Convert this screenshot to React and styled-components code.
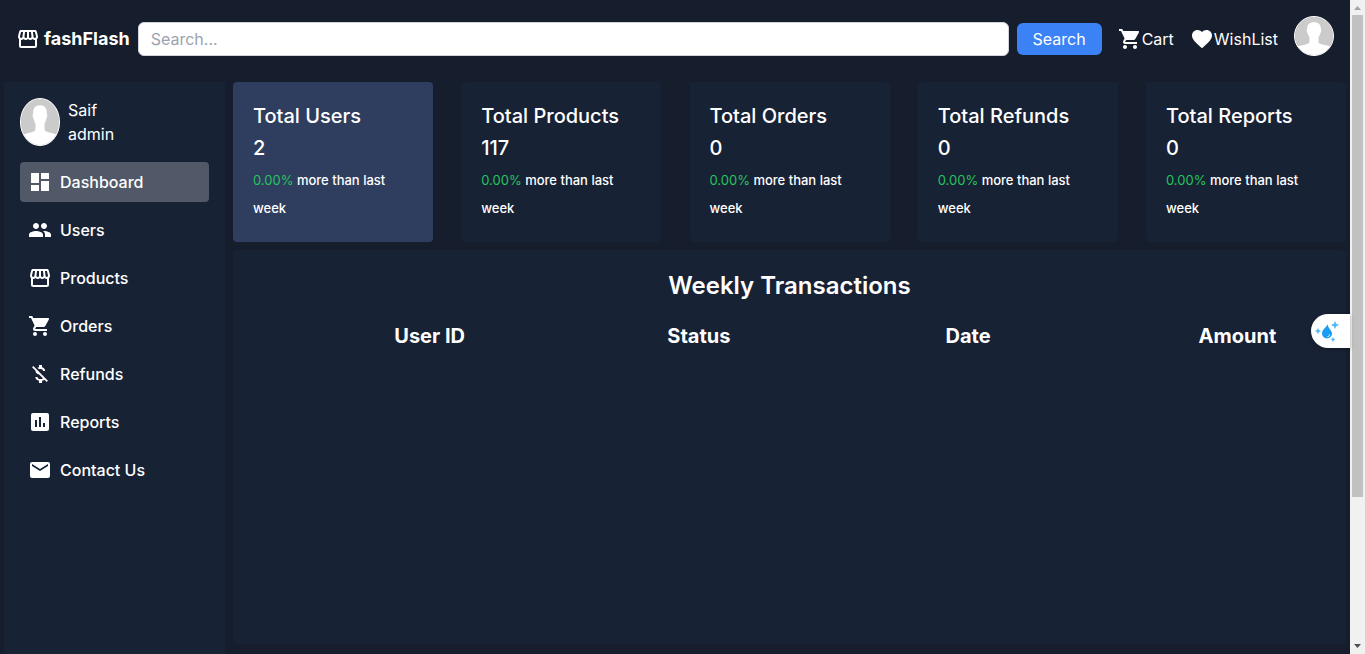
import React from "react";
import styled, { createGlobalStyle } from "styled-components";
import {
  MdDashboard,
  MdPeople,
  MdOutlineStorefront,
  MdShoppingCart,
  MdMoneyOff,
  MdAssessment,
  MdEmail,
  MdFavorite,
} from "react-icons/md";

const GlobalStyle = createGlobalStyle`
  *, *::before, *::after { box-sizing: border-box; }
  body {
    margin: 0;
    background: #161d2c;
    color: #fff;
    font-family: Inter, "Liberation Sans", sans-serif;
    font-size: 16px;
    line-height: 24px;
  }
  h1, h2, h3, p, ul { margin: 0; padding: 0; }
  a { color: inherit; text-decoration: none; }
`;

const Shell = styled.div`
  display: flex;
  min-height: 100vh;
`;

const Page = styled.div`
  flex: 1;
  min-width: 0;
  display: flex;
  flex-direction: column;
`;

const Header = styled.header`
  display: flex;
  align-items: center;
  gap: 16px;
  padding: 16px 16px 20px;
`;

const Brand = styled.a`
  display: flex;
  align-items: center;
  gap: 4px;
  font-size: 18px;
  font-weight: 700;
`;

const SearchForm = styled.form`
  flex: 1;
  display: flex;
  align-items: center;
  gap: 8px;
  margin-left: -8px;
`;

const SearchInput = styled.input`
  flex: 1;
  min-width: 0;
  height: 34px;
  padding: 4px 12px;
  border: 1px solid #d1d5db;
  border-radius: 6px;
  background: #fff;
  color: #111827;
  font: inherit;
  &::placeholder { color: #9ca3af; opacity: 1; }
`;

const SearchButton = styled.button`
  height: 32px;
  padding: 4px 16px;
  border: 0;
  border-radius: 6px;
  background: #3b82f6;
  color: #fff;
  font: inherit;
`;

const HeaderLink = styled.a`
  display: flex;
  align-items: center;
`;

const AvatarFrame = styled.span`
  display: block;
  flex: none;
  width: 40px;
  height: ${(p) => p.$height}px;
  margin-bottom: ${(p) => p.$below || 0}px;
  border: 1px solid #fff;
  border-radius: 50%;
  overflow: hidden;
  background: #ccc;
  svg { display: block; width: 100%; height: 100%; }
`;

const Body = styled.div`
  flex: 1;
  display: grid;
  grid-template-columns: 221px minmax(0, 1fr);
  gap: 8px;
  padding: 0 4px;
`;

const Sidebar = styled.aside`
  padding: 16px;
  background: #182235;
`;

const Profile = styled.div`
  display: flex;
  align-items: center;
  gap: 8px;
  margin-bottom: 16px;
`;

const NavList = styled.ul`
  display: flex;
  flex-direction: column;
  gap: 8px;
  list-style: none;
`;

const NavLink = styled.a`
  display: flex;
  align-items: center;
  gap: 8px;
  padding: 8px;
  border-radius: 4px;
  background: ${(p) => (p.$active ? "#515868" : "transparent")};
  font-weight: 500;
`;

const Main = styled.main`
  display: flex;
  flex-direction: column;
  gap: 8px;
  padding-bottom: 10px;
`;

const Cards = styled.section`
  display: flex;
  justify-content: space-between;
`;

const Card = styled.article`
  display: flex;
  flex-direction: column;
  gap: 4px;
  width: 200px;
  padding: 20px;
  border-radius: 4px;
  background: ${(p) => (p.$active ? "#2f3d5e" : "#182235")};
`;

const CardTitle = styled.h2`
  font-size: 20px;
  font-weight: 500;
  line-height: 28px;
  white-space: nowrap;
`;

const CardValue = styled.p`
  font-size: 20px;
  font-weight: 500;
  line-height: 28px;
`;

const CardNote = styled.p`
  font-size: 13px;
  font-weight: 500;
  line-height: 28px;
`;

const Percent = styled.span`
  color: #22c55e;
  font-weight: 400;
`;

const Panel = styled.section`
  flex: 1;
  padding: 20px 18px;
  border-radius: 4px;
  background: #182235;
`;

const PanelTitle = styled.h2`
  margin-bottom: 20px;
  font-size: 24px;
  font-weight: 600;
  line-height: 32px;
  text-align: center;
`;

const Table = styled.table`
  width: 100%;
  table-layout: fixed;
  border-collapse: collapse;
`;

const HeadCell = styled.th`
  padding: 0 0 0 88px;
  font-size: 20px;
  font-weight: 700;
  line-height: 28px;
  text-align: center;
`;

const Assistant = styled.button`
  position: fixed;
  top: 314px;
  right: 15px;
  display: flex;
  align-items: center;
  width: 39px;
  height: 34px;
  padding: 0 4px;
  border: 0;
  border-radius: 17px 0 0 17px;
  background: #fff;
  box-shadow: 0 1px 4px rgba(0, 0, 0, 0.3);
`;

const ScrollTrack = styled.div`
  position: sticky;
  top: 0;
  display: flex;
  flex-direction: column;
  align-items: center;
  flex: none;
  width: 15px;
  height: 100vh;
  background: #f1f1f1;
  svg { display: block; flex: none; }
`;

const ScrollRail = styled.div`
  flex: 1;
  width: 11px;
`;

const ScrollThumb = styled.div`
  height: 77.2%;
  background: #c1c1c1;
`;

function Avatar({ height, below }) {
  return (
    <AvatarFrame $height={height} $below={below}>
      <svg viewBox="0 0 40 40" preserveAspectRatio="none" role="img" aria-label="Profile">
        <rect width="40" height="40" fill="#cbcbcb" />
        <path
          fill="#fff"
          d="M20 5.500c-5 0-7.300 2.500-7.200 7-.8.500-.6 3.600.6 4.600.4 1.900 1 3.100 1.800 4v5.400c-.3 1.600-2.600 2-5.200 2.600C7 29.800 3.500 30.500 0 31v9h40v-9c-3.500-.5-7-1.200-10-1.900-2.600-.6-4.900-1-5.200-2.600v-5.400c.8-.9 1.400-2.100 1.800-4 1.200-1 1.400-4.100.6-4.600.1-4.500-2.200-7-7.200-7z"
        />
      </svg>
    </AvatarFrame>
  );
}

const nav = [
  ["Dashboard", MdDashboard],
  ["Users", MdPeople],
  ["Products", MdOutlineStorefront],
  ["Orders", MdShoppingCart],
  ["Refunds", MdMoneyOff],
  ["Reports", MdAssessment],
  ["Contact Us", MdEmail],
];

const stats = [
  ["Total Users", 2],
  ["Total Products", 117],
  ["Total Orders", 0],
  ["Total Refunds", 0],
  ["Total Reports", 0],
];

const columns = ["User ID", "Status", "Date", "Amount"];

export default function App() {
  return (
    <>
      <GlobalStyle />
      <Shell>
        <Page>
          <Header>
            <Brand href="#">
              <MdOutlineStorefront size={24} />
              fashFlash
            </Brand>
            <SearchForm onSubmit={(e) => e.preventDefault()}>
              <SearchInput type="text" placeholder="Search..." aria-label="Search" />
              <SearchButton type="submit">Search</SearchButton>
            </SearchForm>
            <HeaderLink href="#cart">
              <MdShoppingCart size={24} />
              Cart
            </HeaderLink>
            <HeaderLink href="#wishlist">
              <MdFavorite size={24} />
              WishList
            </HeaderLink>
            <Avatar height={40} below={6} />
          </Header>
          <Body>
            <Sidebar>
              <Profile>
                <Avatar height={48} />
                <div>
                  <p>Saif</p>
                  <p>admin</p>
                </div>
              </Profile>
              <nav aria-label="Admin">
                <NavList>
                  {nav.map(([label, Icon], i) => (
                    <li key={label}>
                      <NavLink href="#" $active={i === 0}>
                        <Icon size={24} />
                        {label}
                      </NavLink>
                    </li>
                  ))}
                </NavList>
              </nav>
            </Sidebar>
            <Main>
              <Cards>
                {stats.map(([label, value], i) => (
                  <Card key={label} $active={i === 0}>
                    <CardTitle>{label}</CardTitle>
                    <CardValue>{value}</CardValue>
                    <CardNote>
                      <Percent>0.00%</Percent> more than last week
                    </CardNote>
                  </Card>
                ))}
              </Cards>
              <Panel>
                <PanelTitle>Weekly Transactions</PanelTitle>
                <Table>
                  <thead>
                    <tr>
                      {columns.map((c) => (
                        <HeadCell key={c} scope="col">{c}</HeadCell>
                      ))}
                    </tr>
                  </thead>
                </Table>
              </Panel>
            </Main>
          </Body>
        </Page>
        <ScrollTrack aria-hidden="true">
          <svg width="15" height="15"><path d="M4 10h7L7.500 6z" fill="#a3a3a3" /></svg>
          <ScrollRail><ScrollThumb /></ScrollRail>
          <svg width="15" height="15"><path d="M4 5h7L7.500 9z" fill="#505050" /></svg>
        </ScrollTrack>
      </Shell>
      <Assistant type="button" aria-label="Assistant">
        <svg width="24" height="24" viewBox="0 0 24 24">
          <path d="M12.500 5c-.6 3.500-5.500 5-5.500 9.500a5 5 0 0 0 10 0c0-3.500-4-5-4.500-9.500z" fill="#1b9cf2" />
          <path d="M14.500 15.500c0 1.300-.8 2.100-2 2.300" stroke="#fff" fill="none" />
          <path d="M20 2.500l1 2.500 2.500 1-2.500 1-1 2.500L19 7l-2.500-1L19 5zM3 9.500l.8 1.700 1.700.8-1.700.8L3 14.500l-.8-1.700L.5 12l1.700-.8zM18 18.500l.6 1.400 1.400.6-1.400.6-.6 1.400-.6-1.400-1.400-.6 1.400-.6z" fill="#45b7f7" stroke="#45b7f7" strokeWidth=".5" />
        </svg>
      </Assistant>
    </>
  );
}
